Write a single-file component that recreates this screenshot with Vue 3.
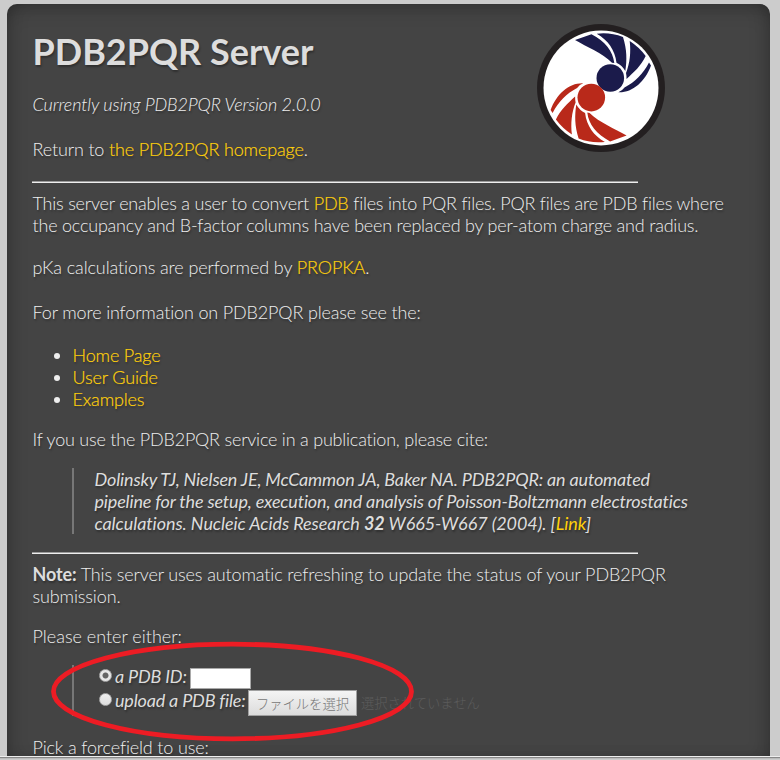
<script setup>
import { ref } from 'vue'

const source = ref('id')
const pdbId = ref('')
const links = ['Home Page', 'User Guide', 'Examples']
</script>

<template>
  <div class="viewport">
    <main class="panel">
      <header class="header">
        <div class="heading">
          <h1>PDB2PQR Server</h1>
          <p class="version"><em>Currently using PDB2PQR Version 2.0.0</em></p>
          <p class="return">Return to <a>the PDB2PQR homepage</a>.</p>
        </div>
        <svg class="logo" width="128" height="128" viewBox="0 0 128 128">
          <circle cx="64" cy="64" r="64" fill="#231f20" />
          <circle cx="64" cy="64" r="57.5" fill="#fff" />
          <defs>
            <g id="swirl">
              <path d="M38 16L54.5 10.2C68 17 76 27 77.3 39L75 38.7C65 29 50 23 38 16Z" />
              <path d="M59.7 9.7Q73 8 86 13C90 26 90 36 88.3 47Q85 41 79.5 38.7C78 26 71 16 59.7 9.7Z" />
              <path d="M92.7 17Q102 23 108.7 32C104 42 97 48 89.5 55Q89.5 51 89 49C93 39 94 28 92.7 17Z" />
              <path d="M112 38.5L114 41.5C108 58 95 69 81.3 68.3Q85 67 87.5 63.5C98 58 106 50 112 38.5Z" />
              <circle cx="73.3" cy="54" r="13.8" />
            </g>
          </defs>
          <use href="#swirl" fill="#1b1b4b" />
          <use href="#swirl" fill="#b9291a" transform="rotate(180 63.8 63.8)" />
        </svg>
      </header>
      <hr />
      <p class="intro">This server enables a user to convert <a>PDB</a> files into PQR files. PQR files are PDB files where<br />the occupancy and B-factor columns have been replaced by per-atom charge and radius.</p>
      <p class="pka">pKa calculations are performed by <a>PROPKA</a>.</p>
      <p class="more">For more information on PDB2PQR please see the:</p>
      <ul>
        <li v-for="link in links" :key="link"><a>{{ link }}</a></li>
      </ul>
      <p class="cite">If you use the PDB2PQR service in a publication, please cite:</p>
      <blockquote class="reference">
        Dolinsky TJ, Nielsen JE, McCammon JA, Baker NA. PDB2PQR: an automated<br />pipeline for the setup, execution, and analysis of Poisson-Boltzmann electrostatics<br /><span class="volume">calculations. Nucleic Acids Research <b>32</b> W665-W667 (2004). [<a>Link</a>]</span>
      </blockquote>
      <hr />
      <p class="note"><b>Note:</b> This server uses automatic refreshing to update the status of your PDB2PQR<br />submission.</p>
      <p class="either">Please enter either:</p>
      <blockquote class="choices">
        <label class="choice">
          <input v-model="source" type="radio" value="id" />
          <span>a PDB ID:</span>
          <input v-model="pdbId" class="field" type="text" />
        </label>
        <label class="choice upload">
          <input v-model="source" type="radio" value="file" />
          <span>upload a PDB file:</span>
          <button type="button">ファイルを選択</button>
          <span class="nofile">選択されていません</span>
        </label>
      </blockquote>
      <p class="forcefield">Pick a forcefield to use:</p>
    </main>
    <div class="bottom-edge"></div>
    <svg class="marker" width="780" height="760" viewBox="0 0 780 760">
      <ellipse cx="232.5" cy="691.5" rx="179" ry="47.3" fill="none" stroke="#ed1c24" stroke-width="4.8" />
    </svg>
  </div>
</template>

<style>
body {
  margin: 0;
  overflow: hidden;
}
</style>

<style scoped>
.viewport {
  position: relative;
  box-sizing: border-box;
  display: flex;
  flex-direction: column;
  width: 780px;
  height: 760px;
  padding: 4px 10px 0 7px;
  overflow: hidden;
  background: #ccc;
  color: #eee;
  font: 300 18px/22px Lato, "Noto Sans CJK JP", sans-serif;
  letter-spacing: -.15px;
}
.panel {
  box-sizing: border-box;
  flex: none;
  width: 763px;
  height: 752px;
  padding: 20px 25px 0;
  overflow: hidden;
  background: #444;
  border-radius: 10px 10px 0 0;
  box-shadow: inset 0 10px 22px -10px rgba(0, 0, 0, .25), inset 10px 0 20px -10px rgba(0, 0, 0, .25), inset -10px 0 20px -10px rgba(0, 0, 0, .25);
  text-shadow: 1px 2px 2px rgba(0, 0, 0, .3);
  white-space: nowrap;
}
.header {
  display: flex;
  justify-content: space-between;
  height: 157px;
  padding-right: 80px;
}
h1 {
  margin: 5px 0 0;
  padding-left: .5px;
  color: #ddd;
  font-size: 36px;
  line-height: 44px;
  font-weight: 700;
  letter-spacing: 0;
}
p {
  margin: 0;
  padding-left: .5px;
}
a {
  color: #ffd00a;
  -webkit-text-stroke: .2px #ffd00a;
}
b { font-weight: 700; color: #ddd; }
.version {
  margin-top: 20px;
  letter-spacing: -.11px;
}
.return { margin-top: 23px; }
.logo { flex: none; }
hr {
  width: 606px;
  height: 2px;
  margin: 0;
  border: 0;
  background: linear-gradient(#9a9a9a 50%, #eee 50%);
}
.intro {
  margin-top: 9px;
  letter-spacing: -.21px;
}
.pka {
  margin-top: 20px;
  letter-spacing: -.11px;
}
.more { margin-top: 23px; }
ul {
  margin: 21px 0 0;
  padding-left: 40.5px;
}
.cite {
  margin-top: 18px;
  letter-spacing: -.21px;
}
blockquote {
  box-sizing: border-box;
  margin: 18px 0 0 40px;
  border-left: 2px solid #777;
  color: #ddd;
  font-weight: 400;
  font-style: italic;
}
.reference {
  height: 66px;
  margin-bottom: 18px;
  padding-left: 20.5px;
  letter-spacing: -.17px;
}
.reference a { -webkit-text-stroke-width: 0; }
.volume { letter-spacing: -.07px; }
.note {
  margin-top: 9px;
  letter-spacing: -.13px;
}
.either {
  margin-top: 18px;
  letter-spacing: 0;
}
.choices {
  display: flex;
  flex-direction: column;
  height: 51px;
  padding-left: 24.5px;
}
.choice {
  display: flex;
  align-items: center;
  height: 24px;
  letter-spacing: -.18px;
}
.choice > * {
  position: relative;
  top: -1px;
}
.choice input[type="radio"] {
  flex: none;
  appearance: none;
  box-sizing: border-box;
  width: 13px;
  height: 13px;
  margin: 0 3.5px 2px 0;
  border: 1px solid #aaa;
  border-radius: 50%;
  background: linear-gradient(#eee, #ddd);
}
.choice input[type="radio"]:checked {
  background: radial-gradient(circle, #666 0 2.6px, #e8e8e8 3.4px);
}
.field {
  box-sizing: border-box;
  width: 61px;
  height: 21px;
  margin: 5px 0 0 3px;
  padding: 0;
  border: 1px solid #a9a9a9;
  background: #fff;
}
button {
  box-sizing: border-box;
  width: 109px;
  height: 26px;
  margin: 6px 0 0 2.5px;
  padding: 0;
  border: 1px solid #a0a0a0;
  background: linear-gradient(#f4f4f4, #dcdcdc);
  color: #777;
  font: 300 13.3px "Noto Sans CJK JP", sans-serif;
}
.nofile {
  margin: 4px 0 0 4px;
  color: #5c5c5c;
  font: 300 13.3px "Noto Sans CJK JP", sans-serif;
  letter-spacing: 0;
  text-shadow: none;
}
.forcefield {
  margin-top: 20px;
  height: 20px;
}
.bottom-edge {
  flex: none;
  height: 4px;
  margin: 0 -10px 0 -7px;
  background: linear-gradient(#eee 0 1px, #888 1px 2px, #bbb 2px 3px, #ccc 3px);
}
.marker {
  position: absolute;
  top: 0;
  left: 0;
  pointer-events: none;
}
</style>
